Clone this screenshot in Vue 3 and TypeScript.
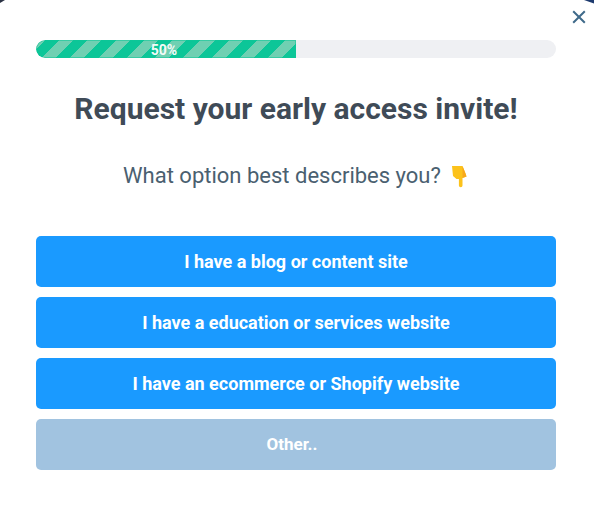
<script setup lang="ts">
const options = [
  { label: 'I have a blog or content site', muted: false },
  { label: 'I have a education or services website', muted: false },
  { label: 'I have an ecommerce or Shopify website', muted: false },
  { label: 'Other..', muted: true },
]
</script>

<template>
  <div class="modal">
    <svg class="corner-left" width="6" height="4" viewBox="0 0 6 4"><path d="M0 0H5L0 3Z" fill="#2b3244" /></svg>
    <svg class="corner-right" width="10" height="4" viewBox="0 0 10 4"><path d="M0 0H10V3.5Z" fill="#1d3a6e" /></svg>
    <svg class="close" width="14" height="14" viewBox="0 0 14 14">
      <path d="M1.2 1.2L12.8 12.8M12.8 1.2L1.2 12.8" stroke="#3f6a8a" stroke-width="2" fill="none" />
    </svg>
    <div class="progress">
      <div class="bar"><span class="pct">50%</span></div>
    </div>
    <h1>Request your early access invite!</h1>
    <p class="sub">
      What option best describes you?
      <svg class="hand" width="19" height="23" viewBox="0 0 19 23">
        <path d="M2 1h10.5l3 7.5 1 3-4 1.5V20.5a1.8 1.8 0 0 1-3.6 0V14H6.5L3 11z" fill="#fcc21b" />
        <path d="M12.5 1l3 7.5 1 3-4 1.5z" fill="#f7a81c" />
      </svg>
    </p>
    <div class="options">
      <button v-for="o in options" :key="o.label" class="opt" :class="{ muted: o.muted }">{{ o.label }}</button>
    </div>
  </div>
</template>

<style>
html, body { margin: 0; background: #fff; }
</style>

<style scoped>
.modal {
  position: relative;
  width: 594px;
  height: 512px;
  box-sizing: border-box;
  padding: 40px 38px 0 36px;
  background: #fff;
  font-family: Roboto, "Liberation Sans", sans-serif;
  overflow: hidden;
}
.corner-left { position: absolute; left: 0; top: 0; }
.corner-right { position: absolute; right: 0; top: 0; }
.close { position: absolute; left: 572px; top: 10px; }
.progress {
  height: 18px;
  border-radius: 9px;
  background: #eff0f3;
  overflow: hidden;
}
.bar {
  width: 260px;
  height: 18px;
  display: flex;
  align-items: center;
  justify-content: center;
  background: repeating-linear-gradient(
    -45deg,
    #0cc698 0 10px,
    #6fd0b2 10px 20px
  );
  box-shadow: inset 0 0 0 1px rgba(12, 198, 152, 0.55);
  border-radius: 9px 0 0 9px;
}
.pct {
  color: #f4fbf8;
  font-size: 14px;
  font-weight: 700;
  line-height: 18px;
  margin-top: 2px;
  margin-left: -4px;
}
h1 {
  margin: 33px 0 0;
  text-align: center;
  color: #3f4b57;
  font-size: 30px;
  line-height: 36px;
  font-weight: 700;
}
.sub {
  margin: 34px 0 0;
  display: flex;
  justify-content: center;
  align-items: center;
  gap: 9px;
  color: #4a6070;
  font-size: 22px;
  line-height: 30px;
}
.options {
  margin-top: 45px;
  display: flex;
  flex-direction: column;
  gap: 10px;
}
.opt {
  height: 51px;
  border: none;
  border-radius: 5px;
  background: #1a9aff;
  color: #fff;
  font-family: inherit;
  font-size: 18px;
  font-weight: 700;
  padding: 0;
}
.opt.muted { background: #a1c3e0; font-size: 17px; padding: 0 8px 2px 0; }
</style>
